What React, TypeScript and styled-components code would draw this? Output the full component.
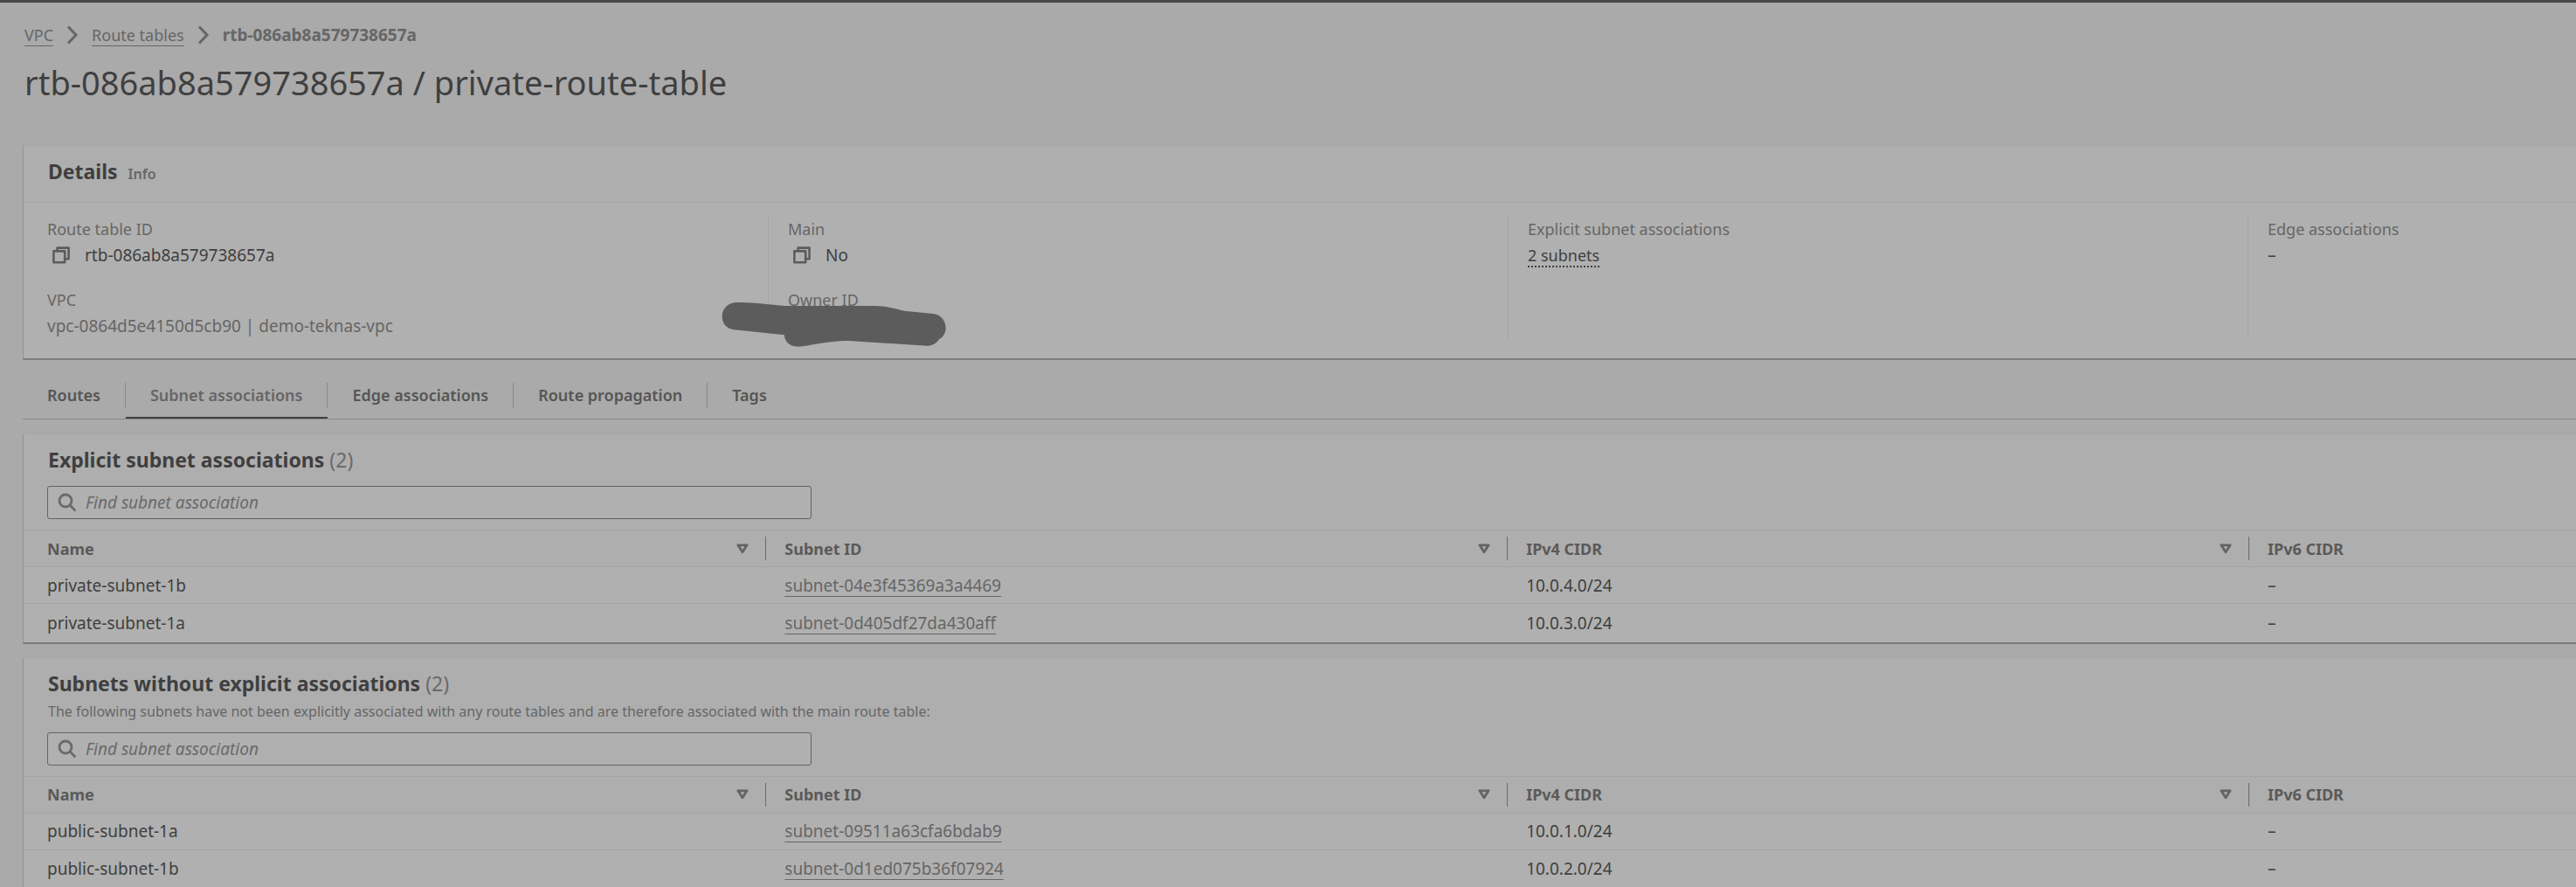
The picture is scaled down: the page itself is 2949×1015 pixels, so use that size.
import React from "react";
import styled, { createGlobalStyle } from "styled-components";

const Global = createGlobalStyle`
  *, *::before, *::after { box-sizing: border-box; }
  html, body { margin: 0; }
  body {
    background: #aaaaaa;
    color: #3f3f3f;
    font-family: "Noto Sans", "Open Sans", sans-serif;
    font-size: 19px;
    line-height: 30px;
  }
  h1, h2, p, dl, dd, dt, ol { margin: 0; padding: 0; }
`;

const Page = styled.div`
  height: 100vh;
  overflow: hidden;
  border-top: 3px solid #484848;
`;

const Main = styled.main`
  padding-left: 26px;
`;

const Crumbs = styled.ol`
  display: flex;
  align-items: center;
  gap: 15px;
  padding: 22px 0 0 2px;
  list-style: none;
  color: #666666;
  font-size: 18px;
`;

const Crumb = styled.li`
  display: flex;
  align-items: center;
  gap: 15px;
`;

const Current = styled.span`
  font-size: 19px;
  font-weight: 700;
`;

const Link = styled.a`
  color: #666666;
  text-decoration: underline 1px;
  text-underline-offset: 5px;
  text-decoration-skip-ink: none;
`;

const Title = styled.h1`
  padding: 14px 0 47px 2px;
  font-size: 38px;
  font-weight: 400;
  line-height: 50px;
`;

const Panel = styled.section`
  border-top: 1px solid #a6a6a6;
  border-left: 1px solid #939393;
  border-bottom: 2px solid #7c7c7c;
  background: #b0b0b0;
`;

const PanelHeader = styled.header`
  padding: 12px 28px;
  background: #aeaeae;
`;

const DetailsHeader = styled(PanelHeader)`
  display: flex;
  align-items: baseline;
  gap: 12px;
  height: 65px;
  border-bottom: 1px solid #a5a5a5;
`;

const Heading = styled.h2`
  font-size: 23px;
  font-weight: 700;
  line-height: 34px;
`;

const Count = styled.span`
  font-weight: 400;
  color: #6a6a6a;
`;

const InfoLink = styled.a`
  color: #666666;
  font-size: 16px;
  font-weight: 600;
  text-decoration: none;
`;

const Columns = styled.div`
  display: grid;
  grid-template-columns: 852fr 847fr 847fr 376fr;
  padding: 15px 0 22px;
`;

const Column = styled.dl`
  display: flex;
  flex-direction: column;
  gap: 21px;
  min-height: 140px;
  padding-left: 22px;
  border-left: 1px solid #a5a5a5;

  &:first-child {
    padding-left: 27px;
    border-left: 0;
  }
`;

const Field = styled.div`
  position: relative;
`;

const Label = styled.dt`
  color: #666666;
  font-size: 18px;
`;

const Value = styled.dd<{ $muted?: boolean }>`
  display: flex;
  align-items: center;
  height: 30px;
  color: ${(p) => (p.$muted ? "#666666" : "#3f3f3f")};
`;

const CopyButton = styled.button`
  display: flex;
  margin: 0 17px 0 0;
  padding: 0 0 0 6px;
  border: 0;
  background: none;
  color: #5c5c5c;
`;

const Popover = styled.button`
  padding: 0;
  border: 0;
  background: none;
  color: inherit;
  font: inherit;
  font-size: 18px;
  text-decoration: underline dotted 2px;
  text-underline-offset: 5px;
`;

const Redaction = styled.svg`
  position: absolute;
  top: 18px;
  left: -76px;
  width: 257px;
  height: 51px;
`;

const Tabs = styled.div`
  display: flex;
  height: 68px;
  margin-bottom: 16px;
  padding-top: 26px;
  border-bottom: 1px solid #888888;
`;

const Tab = styled.button<{ $active?: boolean }>`
  display: flex;
  align-items: flex-start;
  height: 41px;
  padding: 0;
  border: 0;
  border-bottom: 2px solid ${(p) => (p.$active ? "#3f3f3f" : "transparent")};
  background: none;
  color: ${(p) => (p.$active ? "#666666" : "#555555")};
  font: inherit;
  font-size: 18px;
  font-weight: 600;
  line-height: 29px;

  span {
    padding: 0 28px;
    border-right: 1px solid #888888;
  }

  &:last-child span {
    border-right: 0;
  }
`;

const TablePanel = styled(Panel)`
  & + & {
    margin-top: 15px;
  }
`;

const Description = styled.p`
  color: #666666;
  font-size: 16px;
`;

const Search = styled.label`
  display: flex;
  align-items: center;
  gap: 10px;
  width: 100%;
  max-width: 875px;
  height: 38px;
  margin: 13px 0 0 -1px;
  padding: 0 11px;
  border: 1px solid #636363;
  border-radius: 3px;
  background: #b0b0b0;
  color: #6a6a6a;

  ${Description} + & {
    margin-top: 9px;
  }
`;

const SearchInput = styled.input`
  flex: 1;
  padding: 0;
  border: 0;
  outline: 0;
  background: none;
  color: #3f3f3f;
  font: inherit;

  &::placeholder {
    color: #6a6a6a;
    font-style: italic;
    opacity: 1;
  }
`;

const Table = styled.table`
  width: 100%;
  table-layout: fixed;
  border-collapse: collapse;
  text-align: left;
`;

const Col = styled.col<{ $share: number }>`
  width: ${(p) => p.$share}%;
`;

const Th = styled.th`
  height: 42px;
  padding: 0;
  border-top: 1px solid #a4a4a4;
  border-bottom: 1px solid #a4a4a4;
  background: #aeaeae;
  color: #5a5a5a;
  font-size: 18px;
  font-weight: 700;
`;

const HeadCell = styled.div<{ $first?: boolean; $last?: boolean }>`
  display: flex;
  align-items: center;
  justify-content: space-between;
  height: 27px;
  padding: 0 19px 0 ${(p) => (p.$first ? 27 : 21)}px;
  border-right: ${(p) => (p.$last ? "0" : "1px solid #6a6a6a")};
  line-height: 24px;
`;

const SortButton = styled.button`
  display: flex;
  padding: 0;
  border: 0;
  background: none;
  color: #636363;
`;

const Td = styled.td`
  height: 42px;
  padding: 0 21px;
  border-bottom: 1px solid #a6a6a6;

  &:first-child {
    padding-left: 27px;
  }

  tr:last-child > & {
    height: 44px;
    border-bottom: 0;
  }
`;

const Chevron = () => (
  <svg width="14" height="22" viewBox="0 0 14 22" fill="none" stroke="#666666" strokeWidth="3" aria-hidden="true">
    <path d="M2 1.5 11 11 2 20.5" />
  </svg>
);

const CopyIcon = () => (
  <svg width="20" height="20" viewBox="0 0 20 20" fill="none" stroke="currentColor" strokeWidth="2.6" strokeLinejoin="round" aria-hidden="true">
    <path d="M1.4 5.4h12.8v12.9H1.4z" />
    <path d="M5.6 5V1.6h13v12.6H15" />
  </svg>
);

const SearchIcon = () => (
  <svg width="22" height="22" viewBox="0 0 22 22" fill="none" stroke="currentColor" strokeWidth="2.8" aria-hidden="true">
    <circle cx="9" cy="9" r="7" />
    <path d="m14 14 6.4 6.4" />
  </svg>
);

const SortIcon = () => (
  <svg width="14" height="12" viewBox="0 0 14 12" fill="none" stroke="currentColor" strokeWidth="2.8" strokeLinejoin="round" aria-hidden="true">
    <path d="M1.9 1.8h10.2L7 9.8z" />
  </svg>
);

const Copyable = ({ text }: { text: string }) => (
  <Value>
    <CopyButton aria-label={`Copy ${text}`}>
      <CopyIcon />
    </CopyButton>
    {text}
  </Value>
);

type Subnet = { name: string; id: string; ipv4: string };

const explicitSubnets: Subnet[] = [
  { name: "private-subnet-1b", id: "subnet-04e3f45369a3a4469", ipv4: "10.0.4.0/24" },
  { name: "private-subnet-1a", id: "subnet-0d405df27da430aff", ipv4: "10.0.3.0/24" },
];

const otherSubnets: Subnet[] = [
  { name: "public-subnet-1a", id: "subnet-09511a63cfa6bdab9", ipv4: "10.0.1.0/24" },
  { name: "public-subnet-1b", id: "subnet-0d1ed075b36f07924", ipv4: "10.0.2.0/24" },
];

const columns = [
  { title: "Name", share: 29.1 },
  { title: "Subnet ID", share: 29.05 },
  { title: "IPv4 CIDR", share: 29.05 },
  { title: "IPv6 CIDR", share: 12.8 },
];

const tabs = ["Routes", "Subnet associations", "Edge associations", "Route propagation", "Tags"];

function SubnetPanel({ title, description, rows }: { title: string; description?: string; rows: Subnet[] }) {
  return (
    <TablePanel>
      <PanelHeader>
        <Heading>
          {title} <Count>({rows.length})</Count>
        </Heading>
        {description && <Description>{description}</Description>}
        <Search>
          <SearchIcon />
          <SearchInput type="text" placeholder="Find subnet association" aria-label={`Find in ${title}`} />
        </Search>
      </PanelHeader>
      <Table>
        <colgroup>
          {columns.map((c) => (
            <Col key={c.title} $share={c.share} />
          ))}
        </colgroup>
        <thead>
          <tr>
            {columns.map((c, i) => {
              const last = i === columns.length - 1;
              return (
                <Th key={c.title} scope="col">
                  <HeadCell $first={i === 0} $last={last}>
                    {c.title}
                    {!last && (
                      <SortButton aria-label={`Sort by ${c.title}`}>
                        <SortIcon />
                      </SortButton>
                    )}
                  </HeadCell>
                </Th>
              );
            })}
          </tr>
        </thead>
        <tbody>
          {rows.map((r) => (
            <tr key={r.id}>
              <Td>{r.name}</Td>
              <Td>
                <Link href="#">{r.id}</Link>
              </Td>
              <Td>{r.ipv4}</Td>
              <Td>–</Td>
            </tr>
          ))}
        </tbody>
      </Table>
    </TablePanel>
  );
}

export default function App() {
  return (
    <Page>
      <Global />
      <Main>
        <nav aria-label="Breadcrumb">
          <Crumbs>
            <Crumb>
              <Link href="#">VPC</Link>
              <Chevron />
            </Crumb>
            <Crumb>
              <Link href="#">Route tables</Link>
              <Chevron />
            </Crumb>
            <Crumb>
              <Current>rtb-086ab8a579738657a</Current>
            </Crumb>
          </Crumbs>
        </nav>
        <Title>rtb-086ab8a579738657a / private-route-table</Title>

        <Panel>
          <DetailsHeader>
            <Heading>Details</Heading>
            <InfoLink href="#">Info</InfoLink>
          </DetailsHeader>
          <Columns>
            <Column>
              <Field>
                <Label>Route table ID</Label>
                <Copyable text="rtb-086ab8a579738657a" />
              </Field>
              <Field>
                <Label>VPC</Label>
                <Value $muted>vpc-0864d5e4150d5cb90 | demo-teknas-vpc</Value>
              </Field>
            </Column>
            <Column>
              <Field>
                <Label>Main</Label>
                <Copyable text="No" />
              </Field>
              <Field>
                <Label>Owner ID</Label>
                <Value />
                <Redaction viewBox="138 348 771 153" aria-hidden="true">
                  <path
                    fill="#5c5c5c"
                    d="M188 348C235 347 300 355 355 360L665 360C710 360 740 373 765 377L865 387C892 390 908 412 908 436C908 455 898 468 885 475C875 490 862 497 845 497L575 480C535 480 490 486 470 490C445 494 420 500 400 500C375 500 354 485 354 460L225 446L180 442C155 438 140 420 140 396C140 370 160 350 188 348Z"
                  />
                </Redaction>
              </Field>
            </Column>
            <Column>
              <Field>
                <Label>Explicit subnet associations</Label>
                <Value>
                  <Popover>2 subnets</Popover>
                </Value>
              </Field>
            </Column>
            <Column>
              <Field>
                <Label>Edge associations</Label>
                <Value>–</Value>
              </Field>
            </Column>
          </Columns>
        </Panel>

        <Tabs role="tablist">
          {tabs.map((t) => {
            const active = t === "Subnet associations";
            return (
              <Tab key={t} role="tab" aria-selected={active} $active={active}>
                <span>{t}</span>
              </Tab>
            );
          })}
        </Tabs>

        <SubnetPanel title="Explicit subnet associations" rows={explicitSubnets} />
        <SubnetPanel
          title="Subnets without explicit associations"
          description="The following subnets have not been explicitly associated with any route tables and are therefore associated with the main route table:"
          rows={otherSubnets}
        />
      </Main>
    </Page>
  );
}
